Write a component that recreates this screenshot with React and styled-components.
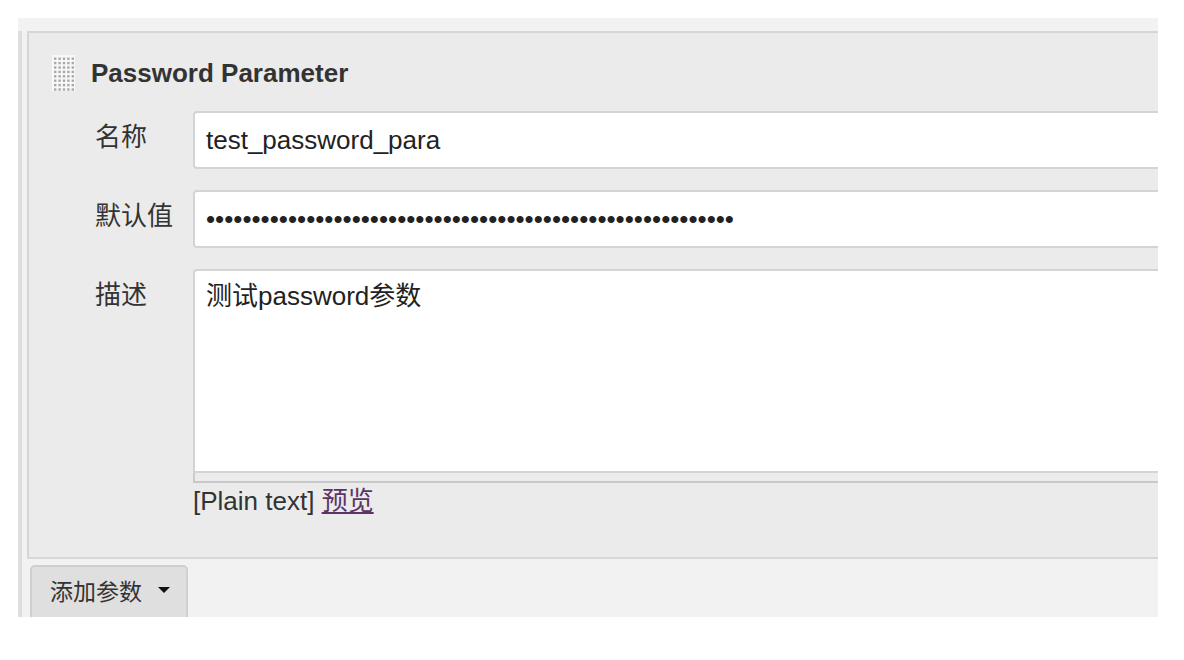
import React from 'react'
import styled, { createGlobalStyle } from 'styled-components'

const GlobalStyle = createGlobalStyle`
  body {
    margin: 0;
    background: #fff;
    font-family: "Liberation Sans", Arial, "Noto Sans CJK SC", sans-serif;
    color: #333;
  }
`

export default function App () {
  return (
    <>
      <GlobalStyle />
      <Viewport>
        <Chunk>
          <Panel>
            <Header>
              <Grip />
              <Title>Password Parameter</Title>
            </Header>
            <Rows>
              <Row>
                <Label>名称</Label>
                <Field>
                  <TextInput type="text" defaultValue="test_password_para" readOnly />
                </Field>
              </Row>
              <Row>
                <Label>默认值</Label>
                <Field>
                  <TextInput type="password" defaultValue={'x'.repeat(58)} readOnly />
                </Field>
              </Row>
              <Row>
                <Label>描述</Label>
                <Field>
                  <TextArea defaultValue="测试password参数" readOnly />
                  <ResizeHandle />
                  <Hint>[Plain text] <PreviewLink href="#">预览</PreviewLink></Hint>
                </Field>
              </Row>
            </Rows>
          </Panel>
          <AddButton type="button">
            添加参数
            <Caret />
          </AddButton>
        </Chunk>
      </Viewport>
    </>
  )
}

// dotted drag handle
function Grip () {
  const dots = []
  for (let r = 0; r < 8; r++) {
    for (let c = 0; c < 5; c++) {
      dots.push(<rect key={r + '-' + c} x={2 + c * 4.4} y={2.5 + r * 4.4} width="2.4" height="2.4" fill="#a9a9a9" />)
    }
  }
  return (
    <GripBox width="23" height="36" viewBox="0 0 23 36">
      <rect width="23" height="36" fill="#f8f8f8" />
      {dots}
    </GripBox>
  )
}

const Viewport = styled.div`
  margin: 18px 0 0 18px;
  width: 1140px;
  height: 599px;
  overflow: hidden;
  background: #f2f2f2;
  padding-top: 13px;
  box-sizing: border-box;
`

const Chunk = styled.div`
  width: 1200px;
  height: 100%;
  border-left: 4px solid #dedede;
  padding-left: 5px;
  box-sizing: border-box;
`

const Panel = styled.div`
  height: 528px;
  box-sizing: border-box;
  border: 2px solid #d6d6d6;
  border-right: none;
  background: #ebebeb;
  padding: 22px 0 0 23px;
`

const Header = styled.div`
  display: flex;
  align-items: center;
  gap: 16px;
  height: 36px;
`

const GripBox = styled.svg`
  display: block;
  flex: none;
`

const Title = styled.b`
  font-size: 26px;
  font-weight: bold;
  color: #333;
`

const Rows = styled.div`
  display: flex;
  flex-direction: column;
  gap: 21px;
  margin-top: 20px;
`

const Row = styled.div`
  display: flex;
  align-items: flex-start;
`

const Label = styled.div`
  width: 98px;
  padding-left: 43px;
  padding-top: 11px;
  flex: none;
  font-size: 26px;
  line-height: 31px;
  color: #333;
`

const Field = styled.div`
  flex: 1;
  display: flex;
  flex-direction: column;
`

const TextInput = styled.input`
  height: 58px;
  box-sizing: border-box;
  border: 2px solid #d4d4d4;
  border-radius: 4px;
  background: #fff;
  padding: 0 11px;
  font-family: "Liberation Sans", Arial, sans-serif;
  font-size: 26px;
  color: #222;
  outline: none;
`

const TextArea = styled.textarea`
  height: 204px;
  box-sizing: border-box;
  border: 2px solid #d4d4d4;
  border-radius: 4px 4px 0 0;
  background: #fff;
  padding: 10px 11px;
  font-family: "Liberation Sans", Arial, "Noto Sans CJK SC", sans-serif;
  font-size: 26px;
  line-height: 31px;
  color: #222;
  resize: none;
  outline: none;
`

const ResizeHandle = styled.div`
  height: 10px;
  box-sizing: border-box;
  background: #ececec;
  border-left: 2px solid #cacaca;
  border-bottom: 2px solid #c8c8c8;
`

const Hint = styled.div`
  margin-top: 3px;
  font-size: 26px;
  line-height: 31px;
  color: #333;
`

const PreviewLink = styled.a`
  color: #5c3566;
  text-decoration: underline;
`

const AddButton = styled.button`
  display: flex;
  align-items: center;
  margin: 6px 0 0 3px;
  width: 158px;
  height: 56px;
  box-sizing: border-box;
  padding: 0 0 6px 18px;
  background: #dfdfdf;
  border: 2px solid #cfcfcf;
  border-radius: 5px;
  font-family: "Liberation Sans", Arial, "Noto Sans CJK SC", sans-serif;
  font-size: 23px;
  color: #333;
`

const Caret = styled.span`
  margin-left: 16px;
  width: 0;
  height: 0;
  border-left: 6px solid transparent;
  border-right: 6px solid transparent;
  border-top: 6px solid #111;
`
